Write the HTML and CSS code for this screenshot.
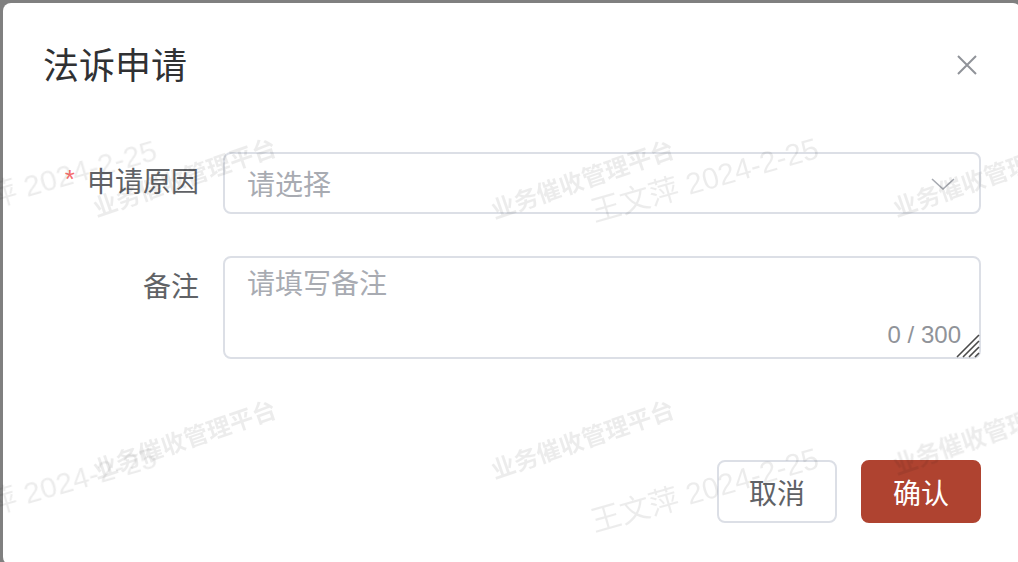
FILE: index.html
```html
<!DOCTYPE html>
<html lang="zh-CN">
<head>
<meta charset="utf-8">
<title>法诉申请</title>
<link rel="stylesheet" href="styles.css">
</head>
<body>
<div class="dialog">
  <div class="dialog-header">
    <span class="dialog-title">法诉申请</span>
    <button class="close-btn" aria-label="关闭">
      <svg width="20" height="20" viewBox="0 0 20 20"><path d="M1 1 L19 19 M19 1 L1 19" stroke="#909399" stroke-width="2" fill="none"/></svg>
    </button>
  </div>
  <div class="dialog-body">
    <div class="form-item form-item-select">
      <label class="form-label"><span class="req">*</span>申请原因</label>
      <div class="form-control">
        <div class="select">
          <span class="placeholder">请选择</span>
          <svg class="chevron" width="24" height="12" viewBox="0 0 24 12"><path d="M1 1 L12 11 L23 1" stroke="#a8abb2" stroke-width="1.6" fill="none"/></svg>
        </div>
      </div>
    </div>
    <div class="form-item form-item-text">
      <label class="form-label">备注</label>
      <div class="form-control">
        <div class="textarea-wrap">
          <textarea class="textarea" placeholder="请填写备注"></textarea>
          <span class="count">0 / 300</span>
          <svg class="grip" width="26" height="26" viewBox="0 0 26 26"><path d="M25 3 L3 25 M25 9 L9 25 M25 15 L15 25 M25 21 L21 25" stroke="#4a4a4a" stroke-width="1.6" fill="none"/></svg>
        </div>
      </div>
    </div>
  </div>
  <div class="dialog-footer">
    <button class="btn btn-default">取消</button>
    <button class="btn btn-primary">确认</button>
  </div>
</div>
<div class="watermark">
  <span class="wm wm1 a1">业务催收管理平台</span>
  <span class="wm wm1 a2">业务催收管理平台</span>
  <span class="wm wm1 a3">业务催收管理平台</span>
  <span class="wm wm1 a4">业务催收管理平台</span>
  <span class="wm wm1 a5">业务催收管理平台</span>
  <span class="wm wm1 a6">业务催收管理平台</span>
  <span class="wm wm2 b1">王文萍 2024-2-25</span>
  <span class="wm wm2 b2">王文萍 2024-2-25</span>
  <span class="wm wm2 b3">王文萍 2024-2-25</span>
  <span class="wm wm2 b4">王文萍 2024-2-25</span>
</div>
</body>
</html>
```
FILE: styles.css
```css
* { box-sizing: border-box; }
html, body {
  margin: 0;
  height: 100%;
  overflow: hidden;
  background: #808080;
  font-family: "Liberation Sans", "Noto Sans CJK SC", sans-serif;
}
.dialog {
  margin: 3px 0 0 3px;
  width: 1018px;
  height: 562px;
  background: #fff;
  border-radius: 8px;
  display: flex;
  flex-direction: column;
}
.dialog-header {
  display: flex;
  justify-content: space-between;
  align-items: center;
  padding: 40px 44px 0 40px;
  height: 88px;
}
.dialog-title {
  font-size: 36px;
  line-height: 48px;
  color: #303133;
}
.close-btn {
  border: 0;
  background: none;
  padding: 0;
  width: 20px;
  height: 20px;
  margin-top: -4px;
  display: flex;
}
.dialog-body {
  padding: 61px 40px 0 40px;
  display: flex;
  flex-direction: column;
  gap: 42px;
}
.form-item {
  display: flex;
}
.form-label {
  width: 180px;
  flex: none;
  padding-right: 24px;
  text-align: right;
  font-size: 28px;
  color: #606266;
  line-height: 62px;
}
.form-item-text .form-label { line-height: 64px; }
.req {
  color: #f56c6c;
  font-size: 26px;
  margin-right: 12px;
  position: relative;
  top: -4px;
}
.form-control { flex: 1; }
.select {
  height: 62px;
  border: 2px solid #dcdfe6;
  border-radius: 8px;
  display: flex;
  align-items: center;
  justify-content: space-between;
  padding: 0 24px 0 22px;
}
.placeholder {
  font-size: 28px;
  color: #a8abb2;
}
.chevron { margin-top: 2px; }
.textarea-wrap {
  position: relative;
  height: 103px;
}
.textarea {
  display: block;
  width: 100%;
  height: 100%;
  border: 2px solid #dcdfe6;
  border-radius: 8px;
  padding: 7px 22px;
  font-family: inherit;
  font-size: 28px;
  line-height: 40px;
  color: #606266;
  resize: none;
  outline: none;
}
.textarea::placeholder { color: #a8abb2; }
.count {
  position: absolute;
  right: 20px;
  bottom: 12px;
  font-size: 24px;
  line-height: 24px;
  color: #909399;
}
.grip {
  position: absolute;
  right: 1px;
  bottom: 1px;
}
.dialog-footer {
  display: flex;
  justify-content: flex-end;
  gap: 24px;
  padding: 0 40px;
  margin-top: 101px;
}
.btn {
  width: 120px;
  height: 63px;
  border-radius: 8px;
  font-family: inherit;
  font-size: 28px;
  padding: 0;
  cursor: pointer;
}
.btn-default {
  background: #fff;
  border: 2px solid #dcdfe6;
  color: #606266;
}
.btn-primary {
  background: #af4330;
  border: 2px solid #af4330;
  color: #fff;
}
.watermark {
  position: fixed;
  inset: 0;
  pointer-events: none;
}
.wm {
  position: absolute;
  white-space: nowrap;
  color: rgba(0, 0, 0, 0.075);
  transform-origin: 0 100%;
}
.wm1 {
  font-size: 24px;
  line-height: 24px;
  font-weight: 700;
  transform: rotate(-19deg);
}
.wm2 {
  font-size: 30px;
  line-height: 30px;
  transform: rotate(-16deg);
}
.a1 { left: 98px; top: 197px; }
.a2 { left: 496px; top: 199px; }
.a3 { left: 898px; top: 197px; }
.a4 { left: 98px; top: 459px; }
.a5 { left: 496px; top: 459px; }
.a6 { left: 898px; top: 454px; }
.b1 { left: 596px; top: 197px; }
.b2 { left: 596px; top: 507px; }
.b3 { left: -66px; top: 199px; }
.b4 { left: -66px; top: 506px; }
```
